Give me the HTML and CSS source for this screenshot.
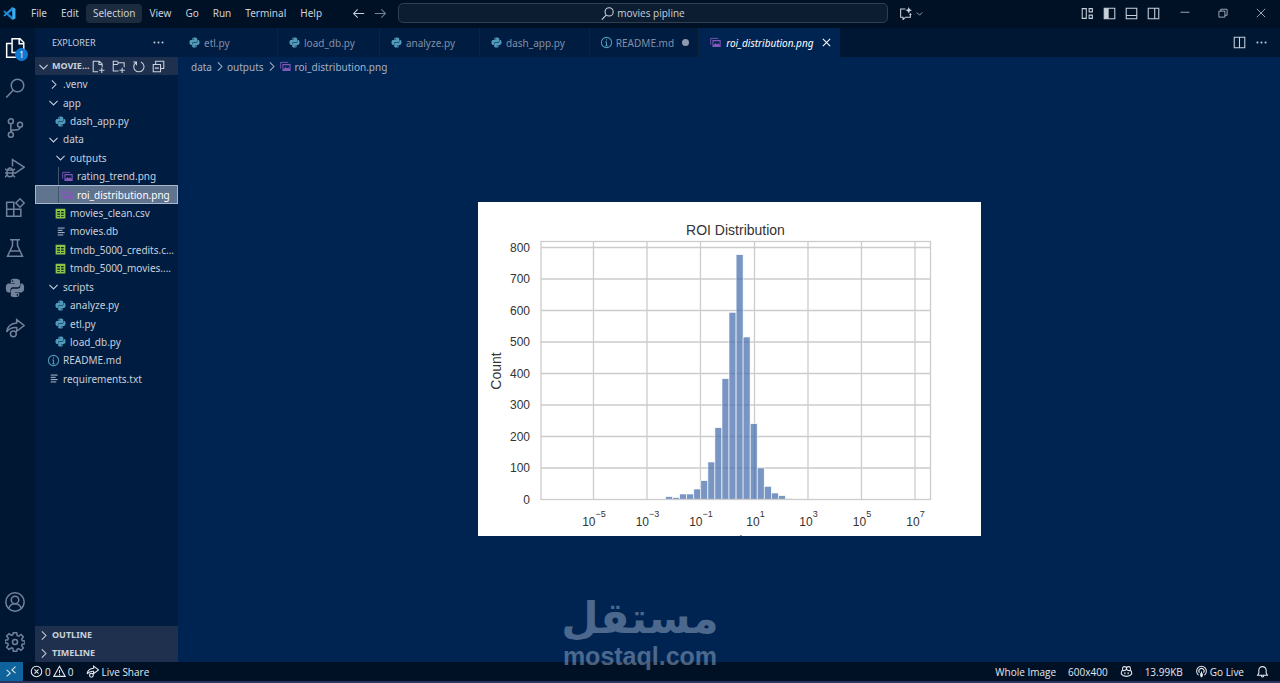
FILE: index.html
```html
<!DOCTYPE html>
<html lang="en">
<head>
	<meta charset="UTF-8">
	<title>movies pipline</title>
	<meta name="viewport" content="width=device-width, initial-scale=1.0">
	<link rel="stylesheet" href="styles.css">
</head>
<body>
	<!-- Icon sprite -->
	<svg class="sprite" aria-hidden="true">
		<symbol id="chevron-right" viewBox="0 0 16 16"><path d="M6 3l5 5-5 5" /></symbol>
		<symbol id="chevron-down" viewBox="0 0 16 16"><path d="M3 6l5 5 5-5" /></symbol>
		<symbol id="python" viewBox="0 0 24 24">
			<path class="fill" d="M11.8 1C6.600 1 7 3.300 7 3.300v2.600h5v.8H4.800S1 6.200 1 12s3.300 5.300 3.300 5.300h2.200v-2.700s-.1-3.400 3.300-3.400h5s3.200 0 3.200-3.100V3.900S18.500 1 11.800 1zM9.100 2.700a1 1 0 1 1 0 2 1 1 0 0 1 0-2z" />
			<path class="fill" d="M12.200 23c5.200 0 4.800-2.300 4.800-2.300v-2.600h-5v-.8h7.200s3.800.5 3.800-5.300-3.300-5.300-3.300-5.300h-1.200v2.700s.1 3.400-3.300 3.400h-5S7 12.800 7 15.900v4.200S5.500 23 12.200 23zm2.700-1.700a1 1 0 1 1 0-2 1 1 0 0 1 0 2z" />
		</symbol>
		<symbol id="image" viewBox="0 0 16 16">
			<path d="M1 11V2h11" />
			<path class="fill" fill-rule="evenodd" d="M3.500 4.500h12v10h-12zm1.500 1.500v6l3-3 2 2 2-1.500 2 2V6z" />
			<path class="fill" d="M4.500 13.500l3.500-4.500 2 2 2-1.500 2.500 4z" />
		</symbol>
		<symbol id="table" viewBox="0 0 16 16">
			<path class="fill" fill-rule="evenodd" d="M2 2h12v12H2zm2 3v1.500h3.300V5zm4.700 0v1.500H12V5zM4 8v1.500h3.300V8zm4.700 0v1.500H12V8zM4 11v1h3.300v-1zm4.700 0v1H12v-1z" />
		</symbol>
		<symbol id="lines" viewBox="0 0 16 16"><path d="M4 3h10M4 6.300h7M4 9.600h10M4 13h8" /></symbol>
		<symbol id="info" viewBox="0 0 16 16"><circle cx="8" cy="8" r="6.300" /><path d="M8 4v1.600M6.500 7.500H8V12M6.500 12h3" /></symbol>
		<symbol id="new-file" viewBox="0 0 16 16"><path d="M7.500 14.500H1.500v-13h7.500l3.500 3.500v4M8.500 1.500v4h4M12 9.500v6.500M8.700 12.700h6.600" /></symbol>
		<symbol id="new-folder" viewBox="0 0 16 16"><path d="M8 13.500H1.500v-12h5l1.500 2h7V9M1.500 5.500h5l1.500-2M12.500 9.500v6.500M9.200 12.700h6.600" /></symbol>
		<symbol id="refresh" viewBox="0 0 16 16"><path d="M5 3A6.300 6.300 0 1 0 11 2.500M1.500 2.500h4v4" /></symbol>
		<symbol id="collapse" viewBox="0 0 16 16"><path d="M1.500 5.500h9v9h-9zM4.500 5.500v-4h10v9h-4M3.500 10h5" /></symbol>
		<symbol id="search" viewBox="0 0 24 24"><circle cx="15" cy="9" r="7.500" /><path d="M10 14.500l-8.500 9" /></symbol>
		<symbol id="files" viewBox="0 0 24 24"><path d="M8.500 1h9.500l4.500 4.500v12H8.500zM17 1v6h5.500M8.500 6.500H2v16.500h14v-5" /></symbol>
		<symbol id="branch" viewBox="0 0 24 24"><circle cx="7" cy="4" r="3" /><circle cx="7" cy="20" r="3" /><circle cx="18" cy="8" r="3" /><path d="M7 7v10M18 11c0 4-4 3-8 3.500-2 .3-3 1-3 2.500" /></symbol>
		<symbol id="debug" viewBox="0 0 24 24"><path d="M9 10V2l14 9-11 7.500M2.500 14.500h7v4.500a3.500 3.500 0 0 1-7 0zM3.500 14.500a2.500 2.500 0 0 1 5 0M0 13l2.500 2M12 13l-2.500 2M0 18h12M0 23l2.500-2.500M12 23l-2.500-2.500" /></symbol>
		<symbol id="extensions" viewBox="0 0 24 24"><path d="M2 5h8.500v17H2zM2 13.500h17V22H10.500M10.500 13.500V22M18 1l5 5-5 5-5-5z" /></symbol>
		<symbol id="beaker" viewBox="0 0 24 24"><path d="M6 2h12M9 2v7L3 22h18L15 9V2M6 15.500h12" /></symbol>
		<symbol id="share" viewBox="0 0 24 24"><path d="M14 2l9 7-9 7v-4.500c-5-.5-9 1-12 5C3 10 7 6.500 14 6z" /><circle cx="10" cy="19" r="3.500" /></symbol>
		<symbol id="account" viewBox="0 0 24 24"><circle cx="12" cy="12" r="11" /><circle cx="12" cy="9.500" r="4.500" /><path d="M4.500 20c1-4 4-6 7.500-6s6.500 2 7.500 6" /></symbol>
		<symbol id="gear" viewBox="0 0 24 24"><path d="M10 1h4l.6 3.300 1.800.8L19.200 3 22 5.800l-2 2.800.7 1.700L24 11v3l-3.300.6-.7 1.800 2 2.800-2.800 2.800-2.800-2-1.800.7L14 23h-4l-.6-3.300-1.800-.7-2.800 2L2 18.200l2-2.800-.7-1.700L0 13v-3l3.300-.6L4 7.600 2 4.800 4.800 2l2.800 2 1.800-.7z" /><circle cx="12" cy="12" r="3" /></symbol>
		<symbol id="arrow-left" viewBox="0 0 16 16"><path d="M15 8H2M7 3L2 8l5 5" /></symbol>
		<symbol id="arrow-right" viewBox="0 0 16 16"><path d="M1 8h13M9 3l5 5-5 5" /></symbol>
		<symbol id="chat" viewBox="0 0 16 16"><path d="M8 2.500H2v10h3v3l3-3h6V9" /><path class="fill" d="M12 0l1.200 2.800L16 4l-2.800 1.200L12 8l-1.200-2.800L8 4l2.800-1.200zM14 7l.6 1.400L16 9l-1.400.6L14 11l-.6-1.400L12 9l1.400-.6z" /></symbol>
		<symbol id="layout" viewBox="0 0 16 16"><path d="M1.500 2h5v12h-5zM10 2h4v4h-4zM10 10h4v4h-4z" /></symbol>
		<symbol id="panel-left" viewBox="0 0 16 16"><path d="M1.500 1.500h13v13h-13z" /><path class="fill" d="M1.500 1.500h5.500v13H1.500z" /></symbol>
		<symbol id="panel-bottom" viewBox="0 0 16 16"><path d="M1.500 1.500h13v13h-13zM1.500 10.500h13" /></symbol>
		<symbol id="panel-right" viewBox="0 0 16 16"><path d="M1.500 1.500h13v13h-13zM9.500 1.500v13" /></symbol>
		<symbol id="split" viewBox="0 0 16 16"><path d="M1.500 1.500h13v13h-13zM8 1.500v13" /></symbol>
		<symbol id="minimize" viewBox="0 0 16 16"><path d="M2 7h12" /></symbol>
		<symbol id="restore" viewBox="0 0 16 16"><path d="M2.500 5.500h8v8h-8zM5 5.500V3h8.500v8H10.500" /></symbol>
		<symbol id="close" viewBox="0 0 16 16"><path d="M2.500 2.500l11 11M13.500 2.500l-11 11" /></symbol>
		<symbol id="tab-close" viewBox="0 0 16 16"><path d="M3.500 3.500l9 9M12.500 3.500l-9 9" /></symbol>
		<symbol id="ellipsis" viewBox="0 0 16 16"><circle class="fill" cx="3" cy="8" r="1.200" /><circle class="fill" cx="8" cy="8" r="1.200" /><circle class="fill" cx="13" cy="8" r="1.200" /></symbol>
		<symbol id="remote" viewBox="0 0 16 16"><path d="M2 6l4.500 4L2 14M13 2L8.500 6l4.500 4" /></symbol>
		<symbol id="error" viewBox="0 0 16 16"><circle cx="8" cy="8" r="6.500" /><path d="M5.500 5.500l5 5M10.500 5.500l-5 5" /></symbol>
		<symbol id="warning" viewBox="0 0 16 16"><path d="M8 1.500L15 14H1zM8 6v4M8 11v1.500" /></symbol>
		<symbol id="copilot" viewBox="0 0 16 16"><path d="M4 7C2.500 5 3 2 5 2c2 0 3 .5 3 2s-1 3-4 3zM12 7c1.500-2 1-5-1-5-2 0-3 .5-3 2s1 3 4 3zM3 6.500C1.500 7.500 1.500 9 1.500 11 3 13 5 14 8 14s5-1 6.500-3c0-2 0-3.500-1.500-4.500M6 9v2.500M10 9v2.500" /></symbol>
		<symbol id="broadcast" viewBox="0 0 16 16"><path d="M4.500 12.500a6 6 0 1 1 7 0M5.500 9.500a3.200 3.200 0 1 1 5 0M8 8v7M7 10v4M9 10v4" /></symbol>
		<symbol id="bell" viewBox="0 0 16 16"><path d="M2 12.500h12L12.500 10V6.500a4.500 4.500 0 0 0-9 0V10zM6.500 13c0 2.500 3 2.500 3 0" /></symbol>
	</svg>

	<header class="titlebar">
		<nav class="menu" aria-label="Menu">
			<svg class="menu--logo" viewBox="0 0 24 24" aria-hidden="true">
				<path fill="#1d7fc4" d="M1 8l2-1.500L17 17.500V24L1 9z" />
				<path fill="#2292dc" d="M1 16l2 1.500L17 6.500V0L1 15z" />
				<path fill="#3aaef2" d="M17 0l6 3v18l-6 3z" />
			</svg>
			<button class="menu--item">File</button>
			<button class="menu--item">Edit</button>
			<button class="menu--item menu--item-active">Selection</button>
			<button class="menu--item">View</button>
			<button class="menu--item">Go</button>
			<button class="menu--item">Run</button>
			<button class="menu--item">Terminal</button>
			<button class="menu--item">Help</button>
			<span class="menu--history">
				<button class="icon-button" aria-label="Back"><svg class="icon"><use href="#arrow-left" /></svg></button>
				<button class="icon-button dim" aria-label="Forward"><svg class="icon"><use href="#arrow-right" /></svg></button>
			</span>
		</nav>
		<button class="command"><svg class="icon icon-search"><use href="#search" /></svg>movies pipline</button>
		<div class="titlebar--right">
			<button class="icon-button chat" aria-label="Chat"><svg class="icon"><use href="#chat" /></svg><svg class="icon icon-small"><use href="#chevron-down" /></svg></button>
			<div class="layouts">
				<button class="icon-button" aria-label="Customize layout"><svg class="icon"><use href="#layout" /></svg></button>
				<button class="icon-button" aria-label="Toggle side bar"><svg class="icon"><use href="#panel-left" /></svg></button>
				<button class="icon-button" aria-label="Toggle panel"><svg class="icon"><use href="#panel-bottom" /></svg></button>
				<button class="icon-button" aria-label="Toggle secondary side bar"><svg class="icon"><use href="#panel-right" /></svg></button>
			</div>
			<div class="window">
				<button class="window--button" aria-label="Minimize"><svg class="icon icon-thin"><use href="#minimize" /></svg></button>
				<button class="window--button" aria-label="Restore"><svg class="icon icon-thin"><use href="#restore" /></svg></button>
				<button class="window--button" aria-label="Close"><svg class="icon icon-thin"><use href="#close" /></svg></button>
			</div>
		</div>
	</header>

	<div class="workbench">
		<nav class="activity" aria-label="Activity bar">
			<button class="activity--item activity--item-active" aria-label="Explorer"><svg class="icon icon-large"><use href="#files" /></svg><span class="badge">1</span></button>
			<button class="activity--item" aria-label="Search"><svg class="icon icon-large"><use href="#search" /></svg></button>
			<button class="activity--item" aria-label="Source control"><svg class="icon icon-large"><use href="#branch" /></svg></button>
			<button class="activity--item" aria-label="Run and debug"><svg class="icon icon-large"><use href="#debug" /></svg></button>
			<button class="activity--item" aria-label="Extensions"><svg class="icon icon-large"><use href="#extensions" /></svg></button>
			<button class="activity--item" aria-label="Testing"><svg class="icon icon-large"><use href="#beaker" /></svg></button>
			<button class="activity--item" aria-label="Python"><svg class="icon icon-large"><use href="#python" /></svg></button>
			<button class="activity--item" aria-label="Live Share"><svg class="icon icon-large"><use href="#share" /></svg></button>
			<span class="activity--space"></span>
			<button class="activity--item" aria-label="Accounts"><svg class="icon icon-large"><use href="#account" /></svg></button>
			<button class="activity--item" aria-label="Manage"><svg class="icon icon-large"><use href="#gear" /></svg></button>
		</nav>

		<aside class="sidebar">
			<div class="sidebar--title">
				<span>EXPLORER</span>
				<button class="icon-button" aria-label="Views"><svg class="icon"><use href="#ellipsis" /></svg></button>
			</div>
			<div class="section">
				<button class="section--name"><svg class="icon"><use href="#chevron-down" /></svg>MOVIE...</button>
				<div class="section--actions">
					<button class="icon-button" aria-label="New file"><svg class="icon"><use href="#new-file" /></svg></button>
					<button class="icon-button" aria-label="New folder"><svg class="icon"><use href="#new-folder" /></svg></button>
					<button class="icon-button" aria-label="Refresh"><svg class="icon"><use href="#refresh" /></svg></button>
					<button class="icon-button" aria-label="Collapse"><svg class="icon"><use href="#collapse" /></svg></button>
				</div>
			</div>
			<div class="tree">
				<button class="tree--row"><svg class="icon"><use href="#chevron-right" /></svg>.venv</button>
				<button class="tree--row"><svg class="icon"><use href="#chevron-down" /></svg>app</button>
				<button class="tree--row level-2"><svg class="icon file-python"><use href="#python" /></svg>dash_app.py</button>
				<button class="tree--row"><svg class="icon"><use href="#chevron-down" /></svg>data</button>
				<button class="tree--row level-2"><svg class="icon"><use href="#chevron-down" /></svg>outputs</button>
				<button class="tree--row level-3"><svg class="icon file-image"><use href="#image" /></svg>rating_trend.png</button>
				<button class="tree--row level-3 tree--row-selected"><svg class="icon file-image"><use href="#image" /></svg>roi_distribution.png</button>
				<button class="tree--row level-2"><svg class="icon file-table"><use href="#table" /></svg>movies_clean.csv</button>
				<button class="tree--row level-2"><svg class="icon file-text"><use href="#lines" /></svg>movies.db</button>
				<button class="tree--row level-2"><svg class="icon file-table"><use href="#table" /></svg>tmdb_5000_credits.c...</button>
				<button class="tree--row level-2"><svg class="icon file-table"><use href="#table" /></svg>tmdb_5000_movies....</button>
				<button class="tree--row"><svg class="icon"><use href="#chevron-down" /></svg>scripts</button>
				<button class="tree--row level-2"><svg class="icon file-python"><use href="#python" /></svg>analyze.py</button>
				<button class="tree--row level-2"><svg class="icon file-python"><use href="#python" /></svg>etl.py</button>
				<button class="tree--row level-2"><svg class="icon file-python"><use href="#python" /></svg>load_db.py</button>
				<button class="tree--row"><svg class="icon file-info"><use href="#info" /></svg>README.md</button>
				<button class="tree--row"><svg class="icon file-text"><use href="#lines" /></svg>requirements.txt</button>
			</div>
			<div class="sidebar--bottom">
				<div class="section"><button class="section--name"><svg class="icon"><use href="#chevron-right" /></svg>OUTLINE</button></div>
				<div class="section"><button class="section--name"><svg class="icon"><use href="#chevron-right" /></svg>TIMELINE</button></div>
			</div>
		</aside>

		<main class="editor">
			<div class="tabs">
				<div class="tab"><button class="tab--name"><svg class="icon file-python"><use href="#python" /></svg>etl.py</button></div>
				<div class="tab"><button class="tab--name"><svg class="icon file-python"><use href="#python" /></svg>load_db.py</button></div>
				<div class="tab"><button class="tab--name"><svg class="icon file-python"><use href="#python" /></svg>analyze.py</button></div>
				<div class="tab"><button class="tab--name"><svg class="icon file-python"><use href="#python" /></svg>dash_app.py</button></div>
				<div class="tab"><button class="tab--name"><svg class="icon file-info"><use href="#info" /></svg>README.md</button><span class="tab--dot"></span></div>
				<div class="tab tab-active"><button class="tab--name"><svg class="icon file-image"><use href="#image" /></svg>roi_distribution.png</button><button class="icon-button tab--close" aria-label="Close tab"><svg class="icon"><use href="#tab-close" /></svg></button></div>
				<div class="tabs--actions">
					<button class="icon-button" aria-label="Split editor"><svg class="icon"><use href="#split" /></svg></button>
					<button class="icon-button" aria-label="More actions"><svg class="icon"><use href="#ellipsis" /></svg></button>
				</div>
			</div>
			<nav class="breadcrumbs" aria-label="Breadcrumbs">
				<a href="#data">data</a>
				<svg class="icon"><use href="#chevron-right" /></svg>
				<a href="#outputs">outputs</a>
				<svg class="icon"><use href="#chevron-right" /></svg>
				<a href="#roi"><svg class="icon file-image"><use href="#image" /></svg>roi_distribution.png</a>
			</nav>
			<div class="preview" id="roi">
				<svg class="chart" viewBox="0 0 503 334" role="img" aria-label="ROI Distribution">
					<rect width="503" height="334" fill="#fff" />
					<path class="grid" d="M63 45.500h390M63 77h390M63 108.500h390M63 140h390M63 171.500h390M63 203h390M63 234.500h390M63 266h390M115.500 39.500v258M169 39.500v258M222.500 39.500v258M276.500 39.500v258M330 39.500v258M383.500 39.500v258M437 39.500v258" />
					<g class="bars">
						<rect x="180.500" y="297" width="7" height="0.500" />
						<rect x="187.600" y="294.700" width="7" height="2.600" />
						<rect x="194.600" y="295.500" width="7" height="1.800" />
						<rect x="201.700" y="292" width="7" height="5.300" />
						<rect x="208.700" y="292" width="7" height="5.300" />
						<rect x="215.800" y="287" width="7" height="10.300" />
						<rect x="222.800" y="278.700" width="7" height="18.600" />
						<rect x="229.900" y="260" width="7" height="37.300" />
						<rect x="236.900" y="225.700" width="7" height="71.600" />
						<rect x="244" y="176.700" width="7" height="120.600" />
						<rect x="251" y="110.300" width="7" height="187" />
						<rect x="258.100" y="52.700" width="7" height="244.600" />
						<rect x="265.100" y="135" width="7" height="162.300" />
						<rect x="272.200" y="221.700" width="7" height="75.600" />
						<rect x="279.200" y="266" width="7" height="31.300" />
						<rect x="286.300" y="284.300" width="7" height="13" />
						<rect x="293.300" y="291" width="7" height="6.300" />
						<rect x="300.400" y="293.700" width="7" height="3.600" />
						<rect x="307.400" y="296.700" width="7" height="0.600" />
					</g>
					<rect class="frame" x="63" y="39.500" width="389.500" height="258" />
					<text class="chart--label" x="257.500" y="33" text-anchor="middle">ROI Distribution</text>
					<text class="chart--label" transform="translate(22.500 169) rotate(-90)" text-anchor="middle">Count</text>
					<g class="chart--tick" text-anchor="end">
						<text x="52" y="50">800</text>
						<text x="52" y="81">700</text>
						<text x="52" y="113">600</text>
						<text x="52" y="144">500</text>
						<text x="52" y="176">400</text>
						<text x="52" y="207">300</text>
						<text x="52" y="239">200</text>
						<text x="52" y="270">100</text>
						<text x="52" y="302">0</text>
					</g>
					<g class="chart--tick" text-anchor="middle">
						<text x="116" y="324">10<tspan class="power" dy="-9">−5</tspan></text>
						<text x="169.500" y="324">10<tspan class="power" dy="-9">−3</tspan></text>
						<text x="223" y="324">10<tspan class="power" dy="-9">−1</tspan></text>
						<text x="277.500" y="324">10<tspan class="power" dy="-9">1</tspan></text>
						<text x="330.500" y="324">10<tspan class="power" dy="-9">3</tspan></text>
						<text x="384" y="324">10<tspan class="power" dy="-9">5</tspan></text>
						<text x="437.500" y="324">10<tspan class="power" dy="-9">7</tspan></text>
					</g>
					<rect x="262" y="333" width="2" height="1" fill="#999" />
				</svg>
			</div>
		</main>
	</div>

	<footer class="status">
		<button class="status--remote" aria-label="Remote"><svg class="icon"><use href="#remote" /></svg></button>
		<button class="status--item status--problems"><svg class="icon"><use href="#error" /></svg>0 <svg class="icon"><use href="#warning" /></svg>0</button>
		<button class="status--item"><svg class="icon icon-share"><use href="#share" /></svg>Live Share</button>
		<div class="status--right">
			<button class="status--item">Whole Image</button>
			<button class="status--item">600x400</button>
			<button class="status--item" aria-label="Copilot"><svg class="icon"><use href="#copilot" /></svg></button>
			<button class="status--item">13.99KB</button>
			<button class="status--item"><svg class="icon"><use href="#broadcast" /></svg>Go Live</button>
			<button class="status--item" aria-label="Notifications"><svg class="icon"><use href="#bell" /></svg></button>
		</div>
	</footer>

	<div class="watermark">
		<span class="watermark--name" lang="ar" dir="rtl">مستقل</span>
		<span class="watermark--site">mostaql.com</span>
	</div>
</body>
</html>
```
FILE: styles.css
```css
* {
	box-sizing: border-box;
}

body {
	position: relative;
	display: flex;
	flex-direction: column;
	height: 100vh;
	margin: 0;
	overflow: hidden;
	background: #002451;
	color: #c8d0dc;
	font-family: "Noto Sans", "Open Sans", sans-serif;
	font-size: 10px;
	line-height: 18px;
}

button {
	display: flex;
	align-items: center;
	padding: 0;
	border: none;
	background: none;
	color: inherit;
	font: inherit;
	white-space: nowrap;
	cursor: pointer;
}

a {
	display: flex;
	align-items: center;
	color: inherit;
	text-decoration: none;
}

.sprite {
	position: absolute;
	width: 0;
	height: 0;
}

/* Icons */
.icon {
	flex: none;
	width: 13px;
	height: 13px;
	fill: none;
	stroke: currentColor;
	stroke-width: 1.3;
}

.fill {
	fill: currentColor;
	stroke: none;
}

.icon-small {
	width: 9px;
	height: 9px;
}

.icon-thin {
	width: 12px;
	height: 12px;
	stroke-width: 1;
}

.icon-large {
	width: 20px;
	height: 20px;
	stroke-width: 1.8;
}

.icon-search,
.icon-share {
	stroke-width: 2;
}

.icon-button {
	justify-content: center;
}

.dim {
	opacity: 0.6;
}

.file-python,
.file-image {
	width: 11px;
	height: 11px;
	margin: 0 1px;
}

.file-python,
.file-info {
	color: #519aba;
}

.file-image {
	color: #8258b8;
}

.file-table {
	color: #8dc149;
}

.file-text {
	padding: 1px;
}

/* Title bar */
.titlebar {
	display: grid;
	grid-template-columns: 398px 1fr 392px;
	align-items: center;
	height: 28px;
	padding-bottom: 2px;
	background: #001126;
}

.menu {
	display: flex;
	align-items: center;
}

.menu--logo {
	width: 13px;
	height: 13px;
	margin: 0 8px 0 3px;
}

.menu--item {
	height: 19px;
	padding: 0 7px;
	border-radius: 4px;
}

.menu--item-active {
	background: #1c2b3e;
}

.menu--history {
	display: flex;
	gap: 9px;
	margin: 0 11px 0 auto;
}

.command {
	justify-content: center;
	gap: 3px;
	height: 20px;
	border: 1px solid #2f3e50;
	border-radius: 5px;
	background: #0d1d31;
	font-family: "Open Sans", sans-serif;
}

.titlebar--right {
	display: flex;
	align-items: center;
	padding-left: 11px;
}

.chat {
	gap: 3px;
}

.layouts {
	display: flex;
	gap: 9px;
	margin-right: 6px;
	margin-left: auto;
}

.window {
	display: flex;
}

.window--button {
	justify-content: center;
	width: 38px;
	height: 26px;
}

/* Workbench */
.workbench {
	display: flex;
	flex: 1;
	min-height: 0;
}

.activity {
	display: flex;
	flex-direction: column;
	width: 35px;
	background: #001733;
	color: #72829a;
}

.activity--item {
	position: relative;
	height: 40px;
	padding-left: 5px;
}

.activity--item-active {
	color: #fff;
}

.activity--space {
	flex: 1;
}

.badge {
	position: absolute;
	right: 7px;
	bottom: 7px;
	width: 13px;
	height: 13px;
	border-radius: 50%;
	background: #0e7ad0;
	color: #fff;
	font-size: 8px;
	line-height: 13px;
	text-align: center;
}

.sidebar {
	display: flex;
	flex-direction: column;
	width: 143px;
	background: #001c40;
}

.sidebar--title {
	display: flex;
	align-items: center;
	justify-content: space-between;
	height: 29px;
	padding: 0 13px 0 17px;
	font-size: 9px;
}

.section {
	display: flex;
	align-items: center;
	justify-content: space-between;
	height: 18px;
	padding: 0 13px 0 2px;
	background: #1e304e;
}

.section--name {
	gap: 2px;
	font-size: 9px;
	font-weight: 700;
}

.section--actions {
	display: flex;
	gap: 7px;
}

.tree {
	display: grid;
	grid-auto-rows: minmax(18px, 1fr);
	grid-template-columns: 100%;
	min-height: 313px;
}

.tree--row {
	gap: 3px;
	padding-left: 12px;
}

.level-2 {
	padding-left: 19px;
}

.level-3 {
	padding-left: 26px;
	background: linear-gradient(#40536f, #40536f) 23px 0 / 1px 100% no-repeat;
}

.tree--row-selected {
	outline: 1px solid #a9b7cb;
	outline-offset: -1px;
	background-color: #60738f;
	color: #fff;
}

.sidebar--bottom {
	margin-top: auto;
}

/* Editor */
.editor {
	display: flex;
	flex: 1;
	flex-direction: column;
	min-width: 0;
}

.tabs {
	display: flex;
	height: 29px;
	background: #001733;
}

.tab {
	display: flex;
	align-items: center;
	min-width: 100px;
	padding: 0 24px 0 10px;
	border-right: 1px solid #0d2340;
	background: #001c40;
	color: #8090a8;
}

.tab--name {
	gap: 3px;
}

.tab--dot {
	width: 7px;
	height: 7px;
	margin: 0 -15px 0 8px;
	border-radius: 50%;
	background: #8f9bad;
}

.tab-active {
	padding-right: 7px;
	border-right: none;
	background: #002451;
	color: #fff;
	font-style: italic;
}

.tab-active .tab--name {
	gap: 4px;
}

.tab--close {
	margin-left: 7px;
}

.tabs--actions {
	display: flex;
	gap: 9px;
	margin-left: auto;
	padding-right: 12px;
}

.breadcrumbs {
	display: flex;
	align-items: center;
	gap: 1px;
	height: 19px;
	padding-left: 13px;
	color: #a5b1c4;
}

.breadcrumbs a {
	gap: 3px;
}

.preview {
	display: flex;
	flex: 1;
	align-items: center;
	justify-content: center;
	min-height: 0;
}

.chart {
	width: 503px;
	max-width: 100%;
	font-family: "Liberation Sans", Arial, sans-serif;
}

.grid,
.frame {
	fill: none;
	stroke: #ccc;
	stroke-width: 1.3;
}

.bars {
	fill: #4c72b0;
	fill-opacity: 0.75;
	stroke: #fff;
	stroke-width: 0.6;
}

.chart--label {
	fill: #333;
	font-size: 14px;
}

.chart--tick {
	fill: #333;
	font-size: 12px;
}

.power {
	font-size: 9px;
}

/* Status bar */
.status {
	display: flex;
	align-items: center;
	height: 21px;
	border-bottom: 2px solid #2c3560;
	background: #001126;
	color: #e4e8ee;
	font-family: "Open Sans", sans-serif;
}

.status--remote {
	justify-content: center;
	width: 23px;
	height: 19px;
	margin-right: 7px;
	background: #0e639c;
}

.status--item {
	gap: 2px;
	margin-right: 13px;
}

.status--right {
	display: flex;
	margin-left: auto;
}

.status--right .status--item {
	margin: 0 11px 0 1px;
}

/* Watermark lies over the page */
.watermark {
	position: absolute;
	right: 0;
	bottom: 13px;
	left: 0;
	display: flex;
	flex-direction: column;
	align-items: center;
	color: #8aa0bf;
	font-weight: 700;
	opacity: 0.55;
	pointer-events: none;
}

.watermark--name {
	font-family: "DejaVu Sans", sans-serif;
	font-size: 43px;
	line-height: 48px;
}

.watermark--site {
	font-family: "Liberation Sans", Arial, sans-serif;
	font-size: 25px;
	line-height: 28px;
}
```
